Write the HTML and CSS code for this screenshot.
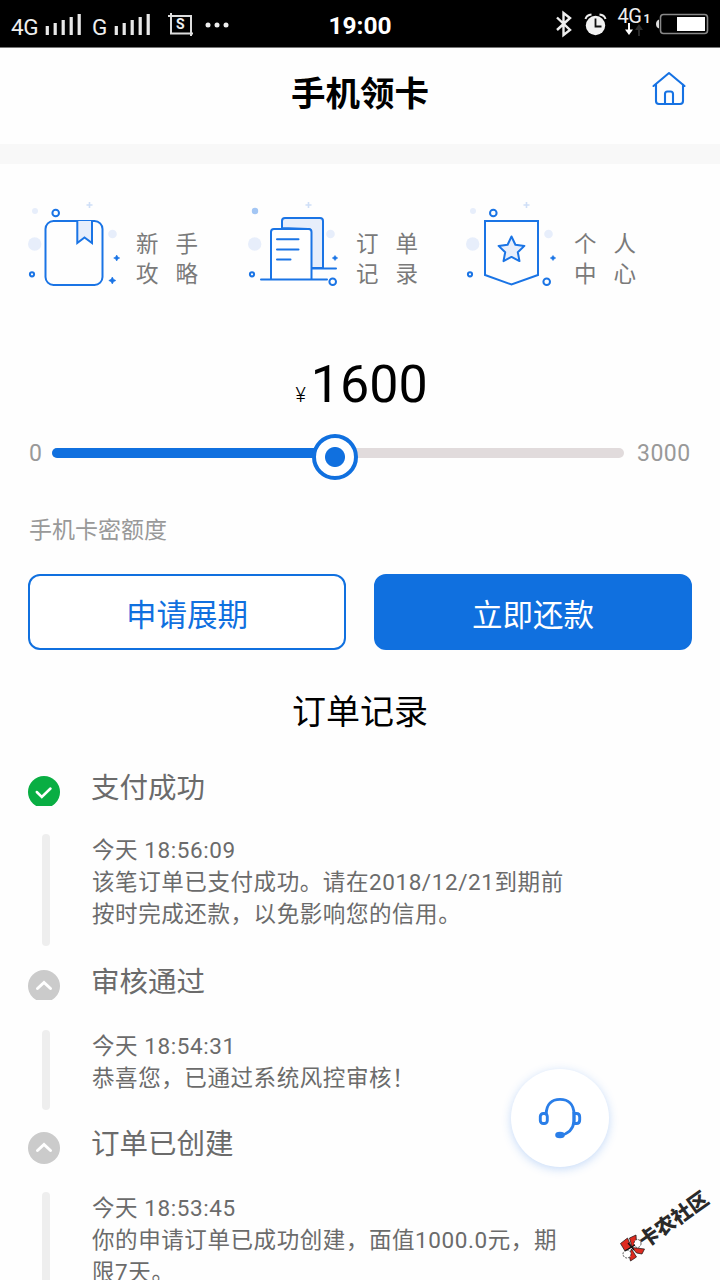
FILE: index.html
```html
<!DOCTYPE html>
<html lang="zh-CN">
<head>
<meta charset="utf-8">
<title>手机领卡</title>
<link rel="stylesheet" href="styles.css">
</head>
<body>
<div class="screen">
  <div class="status">
    <div class="status-left">
      <span class="net">4G</span>
      <svg class="bars" width="38" height="24" viewBox="0 0 38 24"><path d="M2.3 13v9M10.2 10v12M18.2 7v15M26.2 4v18M34.2 1v21" stroke="#e8e8e8" stroke-width="3.2" fill="none"/></svg>
      <span class="net net-g">G</span>
      <svg class="bars" width="38" height="24" viewBox="0 0 38 24"><path d="M2.3 13v9M10.2 10v12M18.2 7v15M26.2 4v18M34.2 1v21" stroke="#e8e8e8" stroke-width="3.2" fill="none"/></svg>
      <span class="shot"><svg width="26" height="24" viewBox="0 0 26 24"><path d="M0 3h23v20M3 0v20.500h22" stroke="#ddd" stroke-width="2" fill="none"/></svg><b>S</b></span>
      <svg class="dots" width="24" height="6" viewBox="0 0 24 6"><g fill="#eee"><circle cx="3" cy="3" r="2.500"/><circle cx="12" cy="3" r="2.500"/><circle cx="21" cy="3" r="2.500"/></g></svg>
    </div>
    <div class="clock">19:00</div>
    <svg class="status-right" width="156" height="36" viewBox="556 4 156 36">
      <path d="M557 17.500l13 12.500-6.500 5V13l6.500 5-13 12" stroke="#eee" stroke-width="2.400" fill="none"/>
      <circle cx="595.500" cy="25.500" r="9.700" fill="#f2f2f2"/>
      <path d="M595.500 18.500v8h6" stroke="#111" stroke-width="1.800" fill="none"/>
      <path d="M585.500 19q1-4 6-4.500M605.500 19q-1-4-6-4.500" stroke="#eee" stroke-width="2" fill="none"/>
      <text x="617.500" y="22.500" class="svg-net">4G</text>
      <text x="643.500" y="22.500" class="svg-sub">1</text>
      <path d="M629 23v7" stroke="#fff" stroke-width="2"/><path d="M625 29.500h8l-4 5.500z" fill="#fff"/>
      <path d="M639 29v7" stroke="#2a2a2a" stroke-width="2"/><path d="M635 30h8l-4-6z" fill="#2a2a2a"/>
      <rect x="660.500" y="14.500" width="47" height="19" rx="3" stroke="#888" stroke-width="1.600" fill="none"/>
      <rect x="677" y="17" width="28" height="14" fill="#fff"/>
      <path d="M659 19.500q-3 1-3 4.500t3 4.500z" fill="#ddd"/>
    </svg>
  </div>

  <header class="header">
    <h1>手机领卡</h1>
    <svg class="home" width="36" height="36" viewBox="0 0 36 36"><path d="M2.500 15L18 2l15.500 13M5 13.500V30q0 3 3 3h21q3 0 3-3V13.500M14 33V23q0-2.500 2.500-2.500h3q2.500 0 2.500 2.500v10" fill="none" stroke="#1672e3" stroke-width="2.100" stroke-linecap="round" stroke-linejoin="round"/></svg>
  </header>
  <div class="divider"></div>

  <nav class="menu">
    <a class="menu-item">
      <svg width="108" height="100" viewBox="20 195 108 100">
        <g fill="#e7eefb"><circle cx="35" cy="211" r="3"/><circle cx="34.700" cy="244" r="6.700"/><circle cx="112.500" cy="234" r="4.300"/></g>
        <path d="M89.500 202v6M86.500 205h6" stroke="#cfdff7" stroke-width="1.600"/>
        <g fill="none" stroke="#1a74e5" stroke-width="2">
          <circle cx="55.700" cy="213" r="3.300"/><circle cx="32" cy="274.300" r="2.100"/>
          <rect x="45.500" y="221" width="57" height="64" rx="8"/>
          <path d="M77.300 221v22l7.200-5.500 7.500 5.500v-22" fill="#e7eefb"/>
        </g>
        <path d="M116.700 255l1 2 2 1-2 1-1 2-1-2-2-1 2-1zM112.300 277l1.200 2.300 2.300 1.200-2.300 1.200-1.200 2.300-1.200-2.300-2.300-1.200 2.300-1.200z" fill="#1a74e5" stroke="#1a74e5" stroke-width=".6"/>
      </svg>
      <span class="menu-label">新手<br>攻略</span>
    </a>
    <a class="menu-item">
      <svg width="108" height="100" viewBox="240 195 108 100">
        <circle cx="255" cy="211" r="3.200" fill="#a3c6f4"/>
        <g fill="#e7eefb"><circle cx="254.700" cy="244" r="6.700"/><circle cx="330.500" cy="234" r="4.300"/></g>
        <path d="M308.500 202v6M305.500 205h6" stroke="#cfdff7" stroke-width="1.600"/>
        <g fill="none" stroke="#1a74e5" stroke-width="2" stroke-linecap="round">
          <path d="M282 228v-7q0-3 3-3h35q3 0 3 3v47h-12V232q0-3-3-3z" fill="#e7eefb"/>
          <path d="M271 279V232q0-3 3-3h34.500q3 0 3 3v47" fill="#fff"/>
          <path d="M261 279.500h66M312 268.500h24M277 239.200h21.500M277 249.500h21.500M277 259.500h13.500"/>
          <circle cx="252" cy="274.300" r="2.100"/><circle cx="332.700" cy="281.700" r="3.300" fill="#fff"/>
        </g>
        <path d="M335 255.500l1 1.500 1.700 1-1.700 1-1 1.500-1-1.500-1.700-1 1.700-1z" fill="#1a74e5" stroke="#1a74e5" stroke-width=".6"/>
      </svg>
      <span class="menu-label">订单<br>记录</span>
    </a>
    <a class="menu-item">
      <svg width="108" height="100" viewBox="458 195 108 100">
        <g fill="#e7eefb"><circle cx="473" cy="211" r="3"/><circle cx="472.700" cy="244" r="6.700"/><circle cx="548.500" cy="234" r="4.300"/></g>
        <path d="M526.500 202v6M523.500 205h6" stroke="#cfdff7" stroke-width="1.600"/>
        <g fill="none" stroke="#1a74e5" stroke-width="2">
          <path d="M485 221h53v54l-26.500 9.500L485 275z"/>
          <path d="M511.500 236.500l3.900 8.300 9 1.100-6.600 6.300 1.700 8.900-8-4.200-8 4.200 1.700-8.900-6.600-6.300 9-1.100z" fill="#e7eefb" stroke-linejoin="round"/>
          <circle cx="493.300" cy="213" r="3.300"/><circle cx="470" cy="274.300" r="2.100"/><circle cx="546.700" cy="281.700" r="3.300"/>
        </g>
        <path d="M553 255.500l1 1.500 1.700 1-1.700 1-1 1.500-1-1.500-1.700-1 1.700-1z" fill="#1a74e5" stroke="#1a74e5" stroke-width=".6"/>
      </svg>
      <span class="menu-label">个人<br>中心</span>
    </a>
  </nav>

  <div class="amount"><span class="yen">¥</span><span class="value">1600</span></div>
  <div class="slider">
    <span class="min">0</span>
    <div class="track"><div class="fill"></div><div class="thumb"></div></div>
    <span class="max">3000</span>
  </div>
  <div class="caption">手机卡密额度</div>
  <div class="actions">
    <button class="btn outline">申请展期</button>
    <button class="btn solid">立即还款</button>
  </div>

  <h2>订单记录</h2>
  <section class="timeline">
    <article class="step step-paid">
      <div class="step-head">
        <svg width="32" height="30" viewBox="0 0 32 30"><circle cx="16" cy="16" r="16" fill="#09ae43"/><path d="M8.800 16l5 5 8.700-8.500" fill="none" stroke="#fff" stroke-width="2.500" stroke-linecap="round"/></svg>
        <h3>支付成功</h3>
      </div>
      <div class="step-body"><i class="rail"></i><p>今天 18:56:09<br>该笔订单已支付成功。请在2018/12/21到期前<br>按时完成还款，以免影响您的信用。</p></div>
    </article>
    <article class="step">
      <div class="step-head">
        <svg width="32" height="30" viewBox="0 0 32 30"><circle cx="16" cy="16" r="16" fill="#cbcbcb"/><path d="M9.500 18.500l6.500-6 6.500 6" fill="none" stroke="#fff" stroke-width="3" stroke-linecap="round"/></svg>
        <h3>审核通过</h3>
      </div>
      <div class="step-body"><i class="rail"></i><p>今天 18:54:31<br>恭喜您，已通过系统风控审核！</p></div>
    </article>
    <article class="step step-created">
      <div class="step-head">
        <svg width="32" height="32" viewBox="0 0 32 32"><circle cx="16" cy="16" r="16" fill="#cbcbcb"/><path d="M9.500 18.500l6.500-6 6.500 6" fill="none" stroke="#fff" stroke-width="3" stroke-linecap="round"/></svg>
        <h3>订单已创建</h3>
      </div>
      <div class="step-body"><i class="rail"></i><p>今天 18:53:45<br>你的申请订单已成功创建，面值1000.0元，期<br>限7天。</p></div>
    </article>
  </section>

  <div class="service">
    <svg width="44" height="44" viewBox="0 0 44 44"><g fill="none" stroke="#2a7ee8" stroke-width="2.900"><path d="M8.200 18.500C8.200 8 14 3.400 22 3.400S36 8 36 18.500V25q-1 12-14 14.500"/><rect x="2.300" y="17.500" width="7" height="10" rx="3"/><path d="M36 17.500h2.500q3.200 0 3.200 3.500v3q0 3.500-3.200 3.500H36z"/></g><ellipse cx="22" cy="39" rx="4.800" ry="3.300" fill="#2a7ee8"/></svg>
  </div>

  <div class="mark">
    <svg width="28" height="28" viewBox="0 0 28 28">
      <g stroke="#111" stroke-width=".7">
        <path d="M2.500 9.500l7-5.500 4 9-6.500 4z" fill="#de2b20"/><path d="M11.500 4l6.500-3 .5 8-4.500 4z" fill="#de2b20"/>
        <path d="M14 13.500l12.500 1.500-2.500 5-5.500-1z" fill="#de2b20"/><path d="M13.500 15l5 8-6 4-1.500-6z" fill="#de2b20"/>
        <ellipse cx="19.500" cy="9.500" rx="3.500" ry="4" fill="#fff" stroke-dasharray="2 1"/><ellipse cx="9" cy="20" rx="4" ry="4" fill="#fff" stroke-dasharray="2 1"/>
      </g>
      <path d="M7 17l10-6M10 9l6 7" stroke="#111" stroke-width="1.200"/>
    </svg>
    <span>卡农社区</span>
  </div>
</div>
</body>
</html>
```
FILE: styles.css
```css
* { box-sizing: border-box; }
body {
  margin: 0;
  background: #fff;
  font-family: Roboto, "Noto Sans CJK SC", sans-serif;
  color: #000;
}
.screen { position: relative; width: 720px; height: 1280px; overflow: hidden; background: #fefefe; }
h1, h2, h3, p { margin: 0; font-weight: 400; }

.status {
  display: grid;
  grid-template-columns: 282px 156px 282px;
  height: 48px;
  background: #000;
  border-bottom: 1px solid #777;
  color: #eee;
}
.status-left { display: flex; align-items: flex-start; padding-left: 11px; }
.net { width: 34px; padding-top: 14px; font-size: 22.5px; line-height: 26px; letter-spacing: -0.5px; }
.net-g { width: 22px; margin-left: 9px; }
.bars { margin-top: 13px; }
.shot { position: relative; width: 26px; height: 24px; margin: 13px 0 0 16px; }
.shot b { position: absolute; left: 8px; top: 3px; font: 700 14px/16px Roboto, sans-serif; }
.dots { margin: 22px 0 0 11px; }
.clock { text-align: center; font-size: 24.5px; font-weight: 700; line-height: 51px; color: #fff; }
.status-right { margin: 4px 8px 0 auto; }
.svg-net { font: 20px Roboto, sans-serif; fill: #eee; letter-spacing: -0.5px; }
.svg-sub { font: 700 12px Roboto, sans-serif; fill: #eee; }

.header {
  display: grid;
  grid-template-columns: 1fr auto 1fr;
  height: 96px;
}
.header h1 { grid-column: 2; font-size: 34.5px; font-weight: 700; line-height: 93px; }
.home { justify-self: end; margin: 23px 33px 0 0; }
.divider { height: 20px; background: #f8f8f8; }

.menu { display: flex; height: 172px; padding: 31px 0 0 20px; }
.menu-item { display: flex; width: 220px; }
.menu-item:nth-child(2) { width: 218px; }
.menu-label { padding: 34px 0 0 8px; font-size: 22.5px; line-height: 30px; letter-spacing: 17px; color: #7a7a7a; white-space: nowrap; }

.amount { display: flex; align-items: baseline; justify-content: center; height: 96px; padding-left: 3px; line-height: 98px; }
.yen { font-size: 20px; font-weight: 300; margin-right: 5px; }
.value { font-size: 52px; }

.slider { display: flex; align-items: center; height: 43px; padding: 0 29px; font-size: 23px; line-height: 29px; color: #999; }
.min { width: 23px; }
.track { position: relative; top: -1px; width: 572px; height: 10px; border-radius: 5px; background: #e1dbdc; }
.fill { width: 280px; height: 10px; border-radius: 5px 0 0 5px; background: #1070df; }
.thumb {
  position: absolute; left: 260px; top: -14px;
  width: 46px; height: 46px;
  border: 4px solid #1070df; border-radius: 50%;
  background: radial-gradient(circle, #1070df 9.500px, #fff 10.500px);
}
.max { margin-left: 13px; letter-spacing: 0.5px; }

.caption { height: 99px; padding: 40px 29px 0; font-size: 23px; line-height: 32px; color: #999; }
.actions { display: grid; grid-template-columns: 318px 318px; gap: 28px; height: 76px; padding: 0 28px; }
.btn { height: 76px; padding: 7px 0 0; border: 2px solid #1070df; border-radius: 12px; font: 30.500px/44px Roboto, "Noto Sans CJK SC", sans-serif; }
.outline { background: #fff; color: #1070df; }
.solid { background: #1070df; color: #fff; }

h2 { height: 100px; padding-top: 37px; text-align: center; font-size: 34px; line-height: 50px; }

.step-head { display: flex; align-items: flex-start; height: 84px; padding: 24px 28px 0; }
.step-head svg { flex: none; }
.step-head h3 { margin: -7px 0 0 31px; font-size: 28.500px; line-height: 40px; color: #6b6b6b; }
.step-paid .step-head { padding-top: 26px; }
.step-created .step-head { height: 82px; padding-top: 22px; }
.step-body { display: flex; padding-left: 42px; color: #6b6b6b; }
.rail { width: 8px; border-radius: 4px; background: #eee; }
.step-body p { padding: 0 0 16px 42px; font-size: 22.5px; line-height: 32px; letter-spacing: 0.58px; white-space: nowrap; }

.service {
  position: absolute; left: 511px; top: 1069px;
  display: flex; align-items: center; justify-content: center;
  width: 98px; height: 98px; border-radius: 50%;
  background: #fff; box-shadow: 0 2px 10px rgba(50, 125, 235, 0.28);
}
.mark { position: absolute; left: 618px; top: 1234px; display: flex; }
.mark span {
  position: absolute; left: 23px; top: -1px;
  font-size: 20px; font-weight: 900; line-height: 20px; color: #2a2a2a; white-space: nowrap;
  transform: rotate(-35.500deg); transform-origin: 0 50%;
}
```
